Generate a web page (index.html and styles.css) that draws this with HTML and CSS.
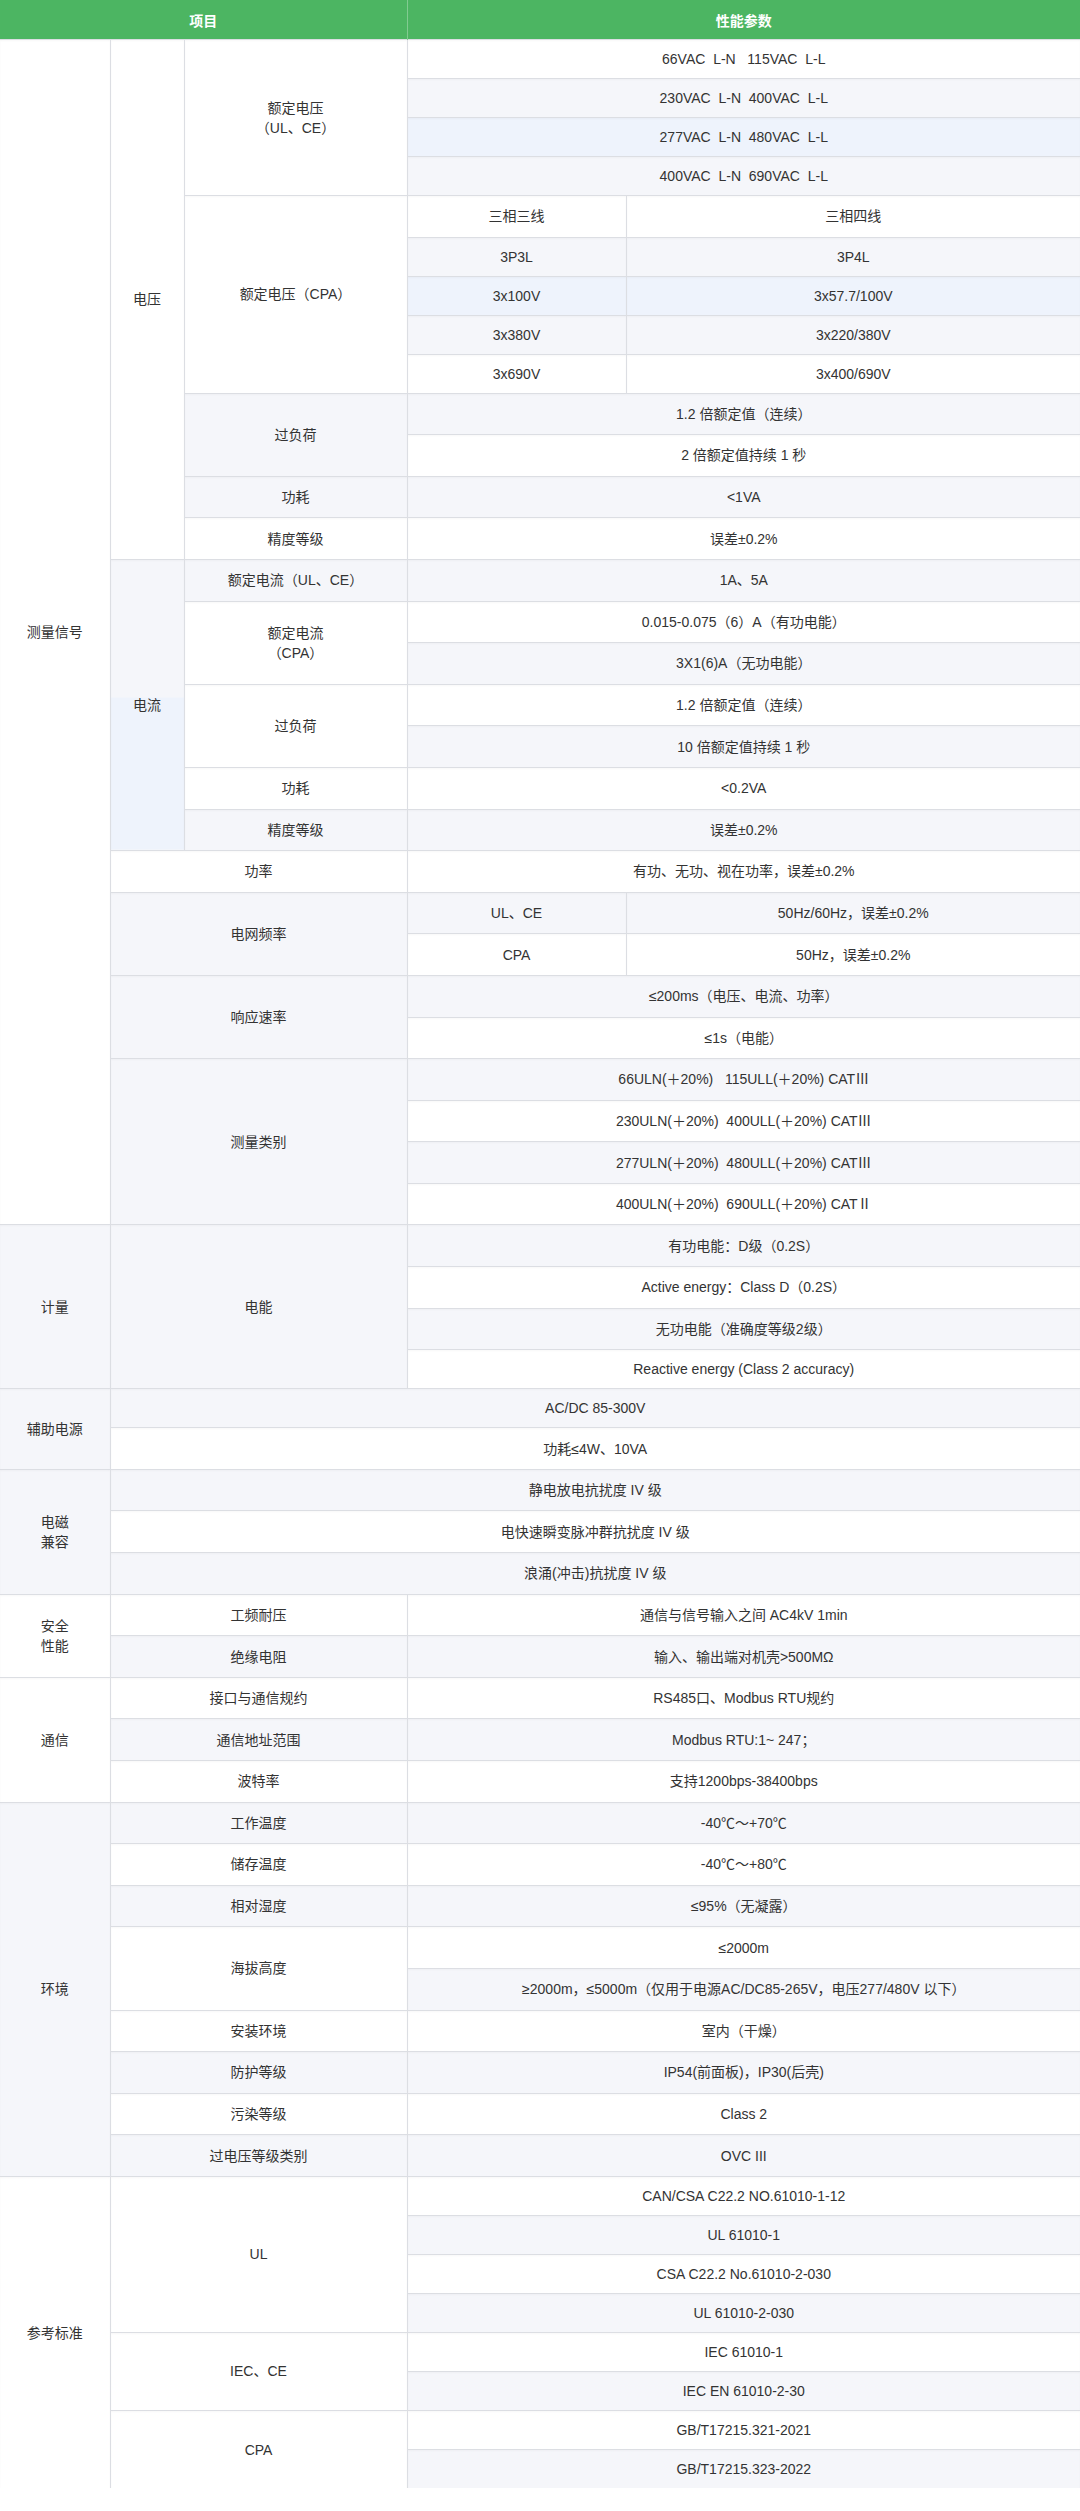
FILE: index.html
```html
<!DOCTYPE html>
<html lang="zh-CN">
<head>
<meta charset="utf-8">
<title>性能参数</title>
<link rel="stylesheet" href="styles.css">
</head>
<body>
<table class="spec">
  <colgroup>
    <col class="w1"><col class="w2"><col class="w3"><col class="w4"><col class="w5">
  </colgroup>
  <thead>
    <tr><th colspan="3" class="h-item">项目</th><th colspan="2">性能参数</th></tr>
  </thead>
  <tbody>
    <tr class="l"><td rowspan="29">测量信号</td><td rowspan="13">电压</td><td rowspan="4">额定电压<br>（UL、CE）</td><td colspan="2">66VAC&nbsp; L-N&nbsp;&nbsp; 115VAC&nbsp; L-L</td></tr>
    <tr class="l"><td colspan="2">230VAC&nbsp; L-N&nbsp; 400VAC&nbsp; L-L</td></tr>
    <tr class="l hl"><td colspan="2">277VAC&nbsp; L-N&nbsp; 480VAC&nbsp; L-L</td></tr>
    <tr class="l"><td colspan="2">400VAC&nbsp; L-N&nbsp; 690VAC&nbsp; L-L</td></tr>
    <tr><td rowspan="5">额定电压（CPA）</td><td>三相三线</td><td>三相四线</td></tr>
    <tr class="l"><td>3P3L</td><td>3P4L</td></tr>
    <tr class="l hl"><td>3x100V</td><td>3x57.7/100V</td></tr>
    <tr class="l"><td>3x380V</td><td>3x220/380V</td></tr>
    <tr class="l"><td>3x690V</td><td>3x400/690V</td></tr>
    <tr><td rowspan="2">过负荷</td><td colspan="2">1.2 倍额定值（连续）</td></tr>
    <tr><td colspan="2">2 倍额定值持续 1 秒</td></tr>
    <tr><td>功耗</td><td colspan="2">&lt;1VA</td></tr>
    <tr><td>精度等级</td><td colspan="2">误差±0.2%</td></tr>
    <tr><td rowspan="7" class="cur">电流</td><td>额定电流（UL、CE）</td><td colspan="2">1A、5A</td></tr>
    <tr><td rowspan="2">额定电流<br>（CPA）</td><td colspan="2">0.015-0.075（6）A（有功电能）</td></tr>
    <tr><td colspan="2">3X1(6)A（无功电能）</td></tr>
    <tr><td rowspan="2">过负荷</td><td colspan="2">1.2 倍额定值（连续）</td></tr>
    <tr><td colspan="2">10 倍额定值持续 1 秒</td></tr>
    <tr><td>功耗</td><td colspan="2">&lt;0.2VA</td></tr>
    <tr><td>精度等级</td><td colspan="2">误差±0.2%</td></tr>
    <tr><td colspan="2">功率</td><td colspan="2">有功、无功、视在功率，误差±0.2%</td></tr>
    <tr><td colspan="2" rowspan="2">电网频率</td><td>UL、CE</td><td>50Hz/60Hz，误差±0.2%</td></tr>
    <tr><td>CPA</td><td>50Hz，误差±0.2%</td></tr>
    <tr><td colspan="2" rowspan="2">响应速率</td><td colspan="2">≤200ms（电压、电流、功率）</td></tr>
    <tr><td colspan="2">≤1s（电能）</td></tr>
    <tr><td colspan="2" rowspan="4">测量类别</td><td colspan="2">66ULN(＋20%)&nbsp;&nbsp; 115ULL(＋20%) CATⅢ</td></tr>
    <tr><td colspan="2">230ULN(＋20%)&nbsp; 400ULL(＋20%) CATⅢ</td></tr>
    <tr><td colspan="2">277ULN(＋20%)&nbsp; 480ULL(＋20%) CATⅢ</td></tr>
    <tr><td colspan="2">400ULN(＋20%)&nbsp; 690ULL(＋20%) CATⅡ</td></tr>
    <tr><td rowspan="4">计量</td><td colspan="2" rowspan="4">电能</td><td colspan="2">有功电能：D级（0.2S）</td></tr>
    <tr><td colspan="2">Active energy：Class D（0.2S）</td></tr>
    <tr><td colspan="2">无功电能（准确度等级2级）</td></tr>
    <tr class="l"><td colspan="2">Reactive energy (Class 2 accuracy)</td></tr>
    <tr class="l"><td rowspan="2">辅助电源</td><td colspan="4">AC/DC 85-300V</td></tr>
    <tr><td colspan="4">功耗≤4W、10VA</td></tr>
    <tr><td rowspan="3">电磁<br>兼容</td><td colspan="4">静电放电抗扰度 IV 级</td></tr>
    <tr><td colspan="4">电快速瞬变脉冲群抗扰度 IV 级</td></tr>
    <tr><td colspan="4">浪涌(冲击)抗扰度 IV 级</td></tr>
    <tr><td rowspan="2">安全<br>性能</td><td colspan="2">工频耐压</td><td colspan="2">通信与信号输入之间 AC4kV 1min</td></tr>
    <tr><td colspan="2">绝缘电阻</td><td colspan="2">输入、输出端对机壳&gt;500MΩ</td></tr>
    <tr><td rowspan="3">通信</td><td colspan="2">接口与通信规约</td><td colspan="2">RS485口、Modbus RTU规约</td></tr>
    <tr><td colspan="2">通信地址范围</td><td colspan="2">Modbus RTU:1~ 247；</td></tr>
    <tr><td colspan="2">波特率</td><td colspan="2">支持1200bps-38400bps</td></tr>
    <tr><td rowspan="9">环境</td><td colspan="2">工作温度</td><td colspan="2">-40℃～+70℃</td></tr>
    <tr><td colspan="2">储存温度</td><td colspan="2">-40℃～+80℃</td></tr>
    <tr><td colspan="2">相对湿度</td><td colspan="2">≤95%（无凝露）</td></tr>
    <tr><td colspan="2" rowspan="2">海拔高度</td><td colspan="2">≤2000m</td></tr>
    <tr><td colspan="2">≥2000m，≤5000m（仅用于电源AC/DC85-265V，电压277/480V 以下）</td></tr>
    <tr><td colspan="2">安装环境</td><td colspan="2">室内（干燥）</td></tr>
    <tr><td colspan="2">防护等级</td><td colspan="2">IP54(前面板)，IP30(后壳)</td></tr>
    <tr><td colspan="2">污染等级</td><td colspan="2">Class 2</td></tr>
    <tr><td colspan="2">过电压等级类别</td><td colspan="2">OVC III</td></tr>
    <tr class="l"><td rowspan="8">参考标准</td><td colspan="2" rowspan="4">UL</td><td colspan="2">CAN/CSA C22.2 NO.61010-1-12</td></tr>
    <tr class="l"><td colspan="2">UL 61010-1</td></tr>
    <tr class="l"><td colspan="2">CSA C22.2 No.61010-2-030</td></tr>
    <tr class="l"><td colspan="2">UL 61010-2-030</td></tr>
    <tr class="l"><td colspan="2" rowspan="2">IEC、CE</td><td colspan="2">IEC 61010-1</td></tr>
    <tr class="l"><td colspan="2">IEC EN 61010-2-30</td></tr>
    <tr class="l"><td colspan="2" rowspan="2">CPA</td><td colspan="2">GB/T17215.321-2021</td></tr>
    <tr class="l"><td colspan="2">GB/T17215.323-2022</td></tr>
  </tbody>
</table>
</body>
</html>
```

FILE: styles.css
```css
html, body {
  margin: 0;
  padding: 0;
  background: #ffffff;
}

body {
  font-family: "Liberation Sans", Arial, "Noto Sans CJK SC", sans-serif;
  font-size: 14px;
  color: #333333;
}

.spec {
  width: 1080px;
  border-collapse: collapse;
  border-style: hidden;
  table-layout: fixed;
  box-shadow: 0 3px 6px rgba(0, 0, 0, 0.07);
}

.spec .w1 { width: 110px; }
.spec .w2 { width: 74px; }
.spec .w3 { width: 223px; }
.spec .w4 { width: 219px; }
.spec .w5 { width: 454px; }

.spec th {
  height: 39px;
  padding: 0;
  background: #4cb562;
  color: #ffffff;
  font-weight: bold;
  text-align: center;
  border: none;
}

.spec th.h-item {
  border-right: 1px solid rgba(255, 255, 255, 0.3);
}

.spec td {
  border: 1px solid #dcdee3;
  padding: 0 6px;
  line-height: 20px;
  text-align: center;
  vertical-align: middle;
  box-shadow: inset 0 1px 2px rgba(0, 0, 0, 0.03);
}

.spec tbody tr {
  height: 41.6px;
  background: #ffffff;
}

.spec tbody tr:nth-child(even) {
  background: #f5f6fa;
}

.spec tbody tr.l {
  height: 39px;
}

.spec tbody tr.hl {
  background: #eef3fc;
}

.spec td.cur {
  background: linear-gradient(#f5f6fa 0, #f5f6fa 138px, #eef3fc 138px);
}
```
